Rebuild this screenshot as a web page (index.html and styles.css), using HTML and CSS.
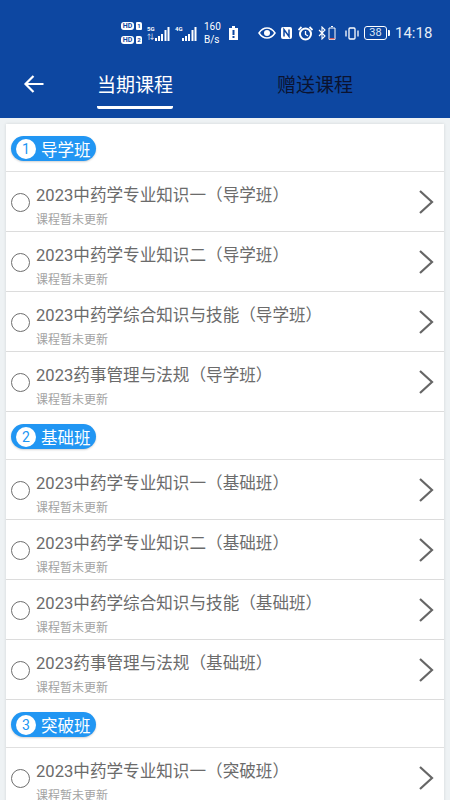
FILE: index.html
```html
<!DOCTYPE html>
<html lang="zh-CN">
<head>
<meta charset="utf-8">
<title>当期课程</title>
<link rel="stylesheet" href="styles.css">
</head>
<body>
<header class="header">
  <div class="status">
    <div class="sims">
      <div class="sim"><span class="hd">HD</span><span class="simn">1</span></div>
      <div class="sim"><span class="hd">HD</span><span class="simn">2</span></div>
    </div>
    <div class="signal"><span class="net">5G</span><span class="updown">⇅</span>
      <svg width="15" height="15" viewBox="0 0 15 15"><path d="M1 15v-3M4 15v-5M7 15V8M10.500 15V4M13.500 15V1" stroke="#fff" stroke-width="2" fill="none"/></svg>
    </div>
    <div class="signal sig2"><span class="net">4G</span>
      <svg width="15" height="15" viewBox="0 0 15 15"><path d="M1 15v-3M4 15v-5M7 15V8M10.500 15V4M13.500 15V1" stroke="#fff" stroke-width="2" fill="none"/></svg>
    </div>
    <div class="speed"><span>160</span><span>B/s</span></div>
    <svg class="batt-small" width="9" height="14" viewBox="0 0 9 14"><path d="M3 0h3v2h3v12H0V2h3z" fill="#fff"/><path d="M4.500 4v5" stroke="#0d47a1" stroke-width="2"/><path d="M3.500 11h2" stroke="#0d47a1" stroke-width="2"/></svg>
    <svg class="ic-eye" width="18" height="12" viewBox="0 0 18 12"><path d="M1 6c2-3 5-5 8-5s6 2 8 5c-2 3-5 5-8 5S3 9 1 6z" fill="none" stroke="#fff" stroke-width="1.500"/><circle cx="9" cy="6" r="3" fill="#fff"/></svg>
    <svg class="ic-nfc" width="13" height="14" viewBox="0 0 13 14"><rect x="1" y="1" width="11" height="12" rx="2" fill="#fff"/><path d="M4 10.500V3.500l5 7V3.500" fill="none" stroke="#0d47a1" stroke-width="1.500"/></svg>
    <svg class="ic-alarm" width="15" height="15" viewBox="0 0 15 15"><circle cx="7.500" cy="8" r="5.500" fill="none" stroke="#fff" stroke-width="2"/><path d="M7.500 5v3.500l2.500 1.500" fill="none" stroke="#fff" stroke-width="1.300"/><path d="M0.500 4l3-3M14.500 4l-3-3" stroke="#fff" stroke-width="1.800"/></svg>
    <svg class="ic-bt" width="8" height="14" viewBox="0 0 8 14"><path d="M1 4l6 6-3 3V1l3 3-6 6" fill="none" stroke="#fff" stroke-width="1.100"/></svg>
    <svg class="ic-bbat" width="8" height="14" viewBox="0 0 8 14"><path d="M3 .5h2M1 2h6v11.400H1z" fill="none" stroke="#fff" stroke-width="1"/><path d="M1.500 12.700h5" stroke="#e25a4e" stroke-width="1.200"/></svg>
    <svg class="ic-vib" width="14" height="13" viewBox="0 0 14 13"><rect x="4" y="1" width="6" height="11" rx="1" fill="none" stroke="#fff" stroke-width="1.300"/><path d="M1 3.500v6M13 3.500v6" stroke="#fff" stroke-width="1.300"/></svg>
    <div class="battery"><span class="batt-body">38</span><span class="batt-tip"></span></div>
    <span class="clock">14:18</span>
  </div>
  <nav class="tabs">
    <svg class="back" width="22" height="20" viewBox="0 0 22 20"><path d="M20.500 10H3M10.500 2L2.500 10l8 8" fill="none" stroke="#fff" stroke-width="2.200"/></svg>
    <div class="tab active">当期课程</div>
    <div class="tab dark">赠送课程</div>
  </nav>
</header>

<main class="card">
  <section>
    <div class="sec"><span class="pill"><span class="num">1</span>导学班</span></div>
    <div class="row"><span class="radio"></span><div class="txt"><div class="title">2023中药学专业知识一（导学班）</div><div class="sub">课程暂未更新</div></div><svg class="chev" width="16" height="26" viewBox="0 0 16 26"><path d="M2 2l12 11L2 24" fill="none" stroke="#666" stroke-width="2.200"/></svg></div>
    <div class="row"><span class="radio"></span><div class="txt"><div class="title">2023中药学专业知识二（导学班）</div><div class="sub">课程暂未更新</div></div><svg class="chev" width="16" height="26" viewBox="0 0 16 26"><path d="M2 2l12 11L2 24" fill="none" stroke="#666" stroke-width="2.200"/></svg></div>
    <div class="row"><span class="radio"></span><div class="txt"><div class="title">2023中药学综合知识与技能（导学班）</div><div class="sub">课程暂未更新</div></div><svg class="chev" width="16" height="26" viewBox="0 0 16 26"><path d="M2 2l12 11L2 24" fill="none" stroke="#666" stroke-width="2.200"/></svg></div>
    <div class="row"><span class="radio"></span><div class="txt"><div class="title">2023药事管理与法规（导学班）</div><div class="sub">课程暂未更新</div></div><svg class="chev" width="16" height="26" viewBox="0 0 16 26"><path d="M2 2l12 11L2 24" fill="none" stroke="#666" stroke-width="2.200"/></svg></div>
  </section>
  <section>
    <div class="sec"><span class="pill"><span class="num">2</span>基础班</span></div>
    <div class="row"><span class="radio"></span><div class="txt"><div class="title">2023中药学专业知识一（基础班）</div><div class="sub">课程暂未更新</div></div><svg class="chev" width="16" height="26" viewBox="0 0 16 26"><path d="M2 2l12 11L2 24" fill="none" stroke="#666" stroke-width="2.200"/></svg></div>
    <div class="row"><span class="radio"></span><div class="txt"><div class="title">2023中药学专业知识二（基础班）</div><div class="sub">课程暂未更新</div></div><svg class="chev" width="16" height="26" viewBox="0 0 16 26"><path d="M2 2l12 11L2 24" fill="none" stroke="#666" stroke-width="2.200"/></svg></div>
    <div class="row"><span class="radio"></span><div class="txt"><div class="title">2023中药学综合知识与技能（基础班）</div><div class="sub">课程暂未更新</div></div><svg class="chev" width="16" height="26" viewBox="0 0 16 26"><path d="M2 2l12 11L2 24" fill="none" stroke="#666" stroke-width="2.200"/></svg></div>
    <div class="row"><span class="radio"></span><div class="txt"><div class="title">2023药事管理与法规（基础班）</div><div class="sub">课程暂未更新</div></div><svg class="chev" width="16" height="26" viewBox="0 0 16 26"><path d="M2 2l12 11L2 24" fill="none" stroke="#666" stroke-width="2.200"/></svg></div>
  </section>
  <section>
    <div class="sec"><span class="pill"><span class="num">3</span>突破班</span></div>
    <div class="row"><span class="radio"></span><div class="txt"><div class="title">2023中药学专业知识一（突破班）</div><div class="sub">课程暂未更新</div></div><svg class="chev" width="16" height="26" viewBox="0 0 16 26"><path d="M2 2l12 11L2 24" fill="none" stroke="#666" stroke-width="2.200"/></svg></div>
  </section>
</main>
</body>
</html>
```
FILE: styles.css
```css
* { box-sizing: border-box; }
html, body { margin: 0; padding: 0; }
body {
  width: 450px;
  height: 800px;
  overflow: hidden;
  background: #eef2f4;
  font-family: Roboto, "Noto Sans CJK SC", sans-serif;
}
.header {
  height: 118px;
  background: #0d47a1;
  color: #fff;
}
.status {
  height: 66px;
  display: flex;
  align-items: center;
  padding: 0 0 0 121px;
}
.sims { display: flex; flex-direction: column; gap: 6px; width: 21px; }
.sim { display: flex; gap: 2px; height: 8px; align-items: center; }
.hd {
  width: 13px;
  background: #fff;
  color: #0d47a1;
  font-size: 7px;
  font-weight: 700;
  line-height: 8px;
  text-align: center;
  border-radius: 3px;
}
.simn {
  background: #fff;
  color: #0d47a1;
  font-size: 6px;
  font-weight: 700;
  line-height: 8px;
  width: 6px;
  text-align: center;
  border-radius: 1px 2px 1px 1px;
}
.signal {
  position: relative;
  margin-left: 5px;
  width: 23px;
  height: 15px;
  display: flex;
  align-items: flex-end;
  justify-content: flex-end;
}
.sig2 { width: 22px; }
.net { position: absolute; left: 0; top: -1px; font-size: 6px; font-weight: 700; line-height: 8px; }
.updown { position: absolute; left: 0; bottom: 0; font-size: 7px; line-height: 7px; }
.speed {
  display: flex;
  flex-direction: column;
  margin-left: 7px;
  font-size: 10px;
  line-height: 13px;
  width: 25px;
}
.batt-small { margin-left: 0; }
.ic-eye { margin-left: 20px; }
.ic-nfc { margin-left: 4px; }
.ic-alarm { margin-left: 5px; }
.ic-bt { margin-left: 5px; }
.ic-bbat { margin-left: 2px; }
.ic-vib { margin-left: 9px; }
.battery { margin-left: 5px; display: flex; align-items: center; gap: 1px; }
.batt-body {
  width: 23px;
  height: 14px;
  border: 1px solid #fff;
  border-radius: 3px;
  font-size: 11px;
  line-height: 12px;
  text-align: center;
  color: #dfe8f5;
}
.batt-tip { width: 2px; height: 6px; background: #fff; border-radius: 0 1px 1px 0; }
.clock { margin-left: 5px; font-size: 15px; color: #e6edf7; }
.tabs {
  position: relative;
  height: 52px;
  display: flex;
  align-items: flex-start;
  padding-left: 97px;
  gap: 104px;
}
.back { position: absolute; left: 23px; top: 8px; }
.tab {
  width: 76px;
  font-size: 19px;
  line-height: 40px;
  height: 43px;
  white-space: nowrap;
}
.tab.active { border-bottom: 3px solid #fff; border-radius: 0 0 2px 2px; }
.tab.dark { color: #0b1330; }
.card {
  margin: 6px 6px 0;
  background: #fff;
  box-shadow: 0 0 3px rgba(0, 0, 0, .12);
}
.sec {
  height: 48px;
  border-bottom: 1px solid #e0e0e0;
  padding: 12px 0 0 5px;
}
.pill {
  display: inline-flex;
  align-items: center;
  height: 25px;
  width: 85px;
  background: #2196f3;
  border-radius: 13px;
  color: #fff;
  font-size: 16.500px;
  box-shadow: 0 1px 2px rgba(0, 0, 0, .18);
  padding-left: 5px;
  gap: 5px;
}
.num {
  width: 20px;
  height: 20px;
  border-radius: 50%;
  background: #fff;
  color: #2196f3;
  font-size: 14px;
  line-height: 20px;
  text-align: center;
}
.row {
  height: 60px;
  border-bottom: 1px solid #dcdcdc;
  display: flex;
  align-items: flex-start;
  padding-left: 5px;
  position: relative;
}
.radio {
  width: 19px;
  height: 19px;
  margin-top: 21px;
  border: 1.500px solid #6e6e6e;
  border-radius: 50%;
  flex: none;
}
.txt { margin-left: 6px; padding-top: 12px; flex: 1; }
.title { font-size: 16.600px; line-height: 24px; color: #6b6b6b; white-space: nowrap; }
.sub { font-size: 12px; line-height: 16px; margin-top: 4px; color: #a3a3a3; white-space: nowrap; }
.chev { margin: 17px 10px 0 0; flex: none; }
```
